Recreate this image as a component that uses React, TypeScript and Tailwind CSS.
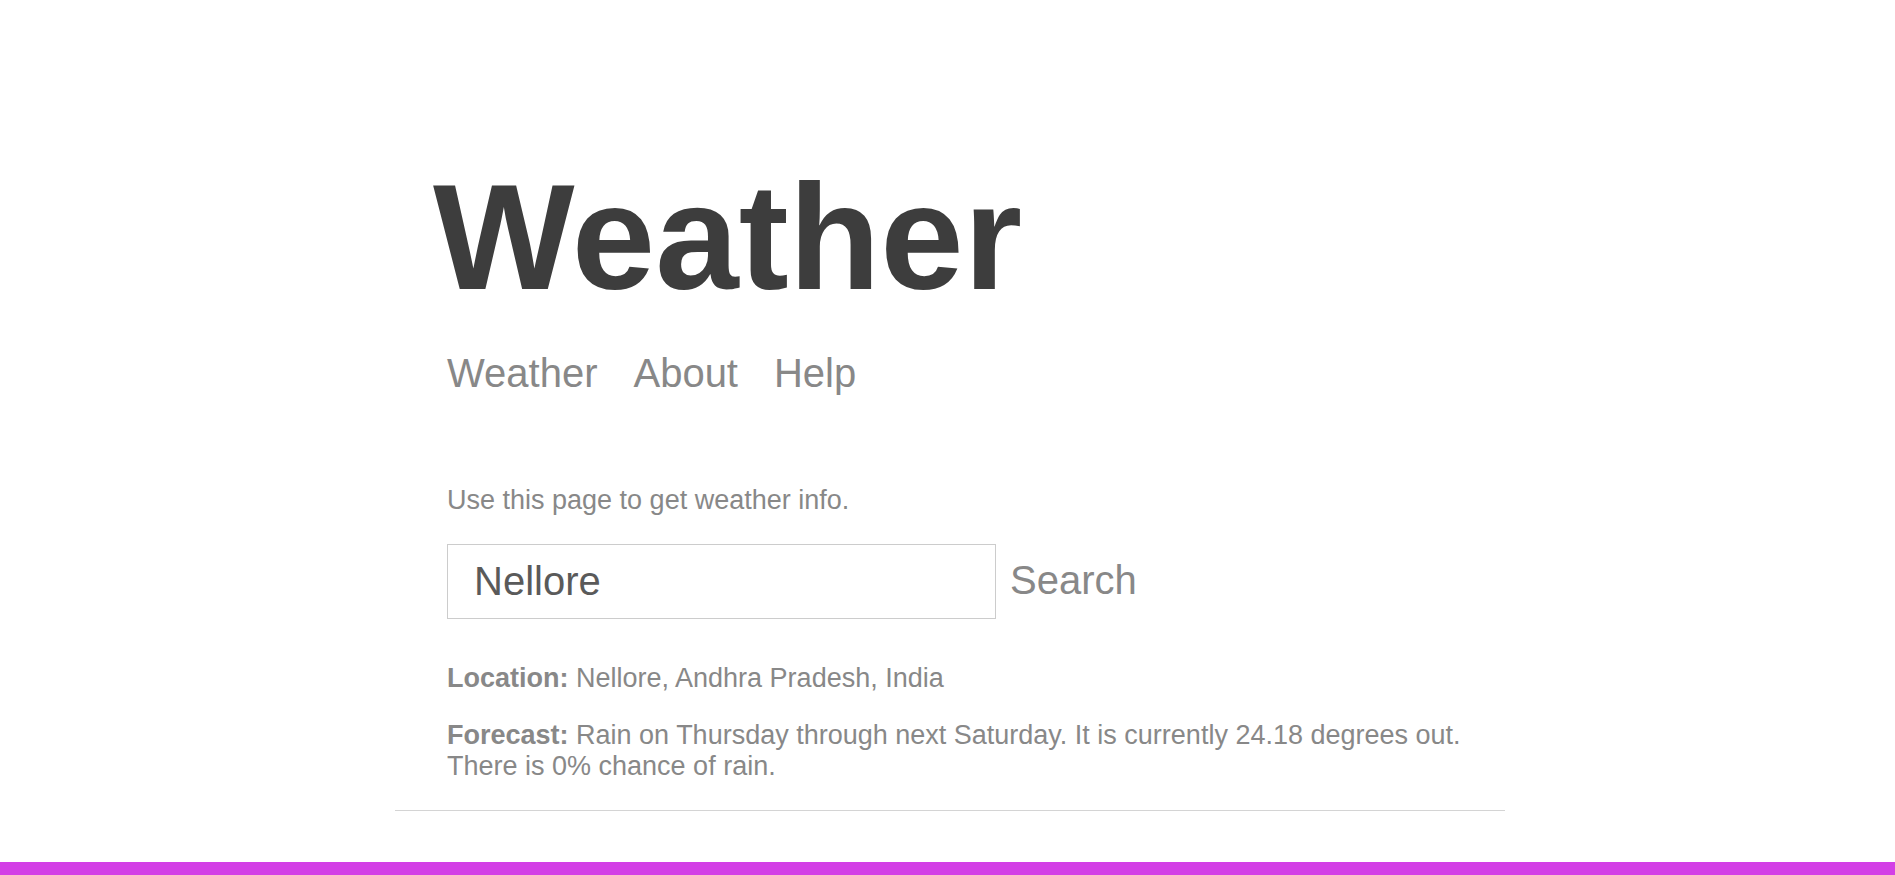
import React from "react";

export default function App() {
  return (
    <div className="w-full h-[875px] bg-white flex flex-col overflow-hidden font-['Liberation_Sans',Arial,sans-serif]">
      <div className="ml-[395px] w-[1110px] flex flex-col">
        <h1 className="mt-[162px] pl-[38px] text-[150px] leading-[150px] font-bold text-[#3d3d3d]">
          Weather
        </h1>
        <nav className="mt-[41px] pl-[52px] flex gap-[36px] text-[40px] leading-[40px] text-[#888888]">
          <a href="#">Weather</a>
          <a href="#">About</a>
          <a href="#">Help</a>
        </nav>
        <div className="pl-[52px] flex flex-col">
          <p className="mt-[92px] text-[27px] leading-[31px] text-[#888888]">
            Use this page to get weather info.
          </p>
          <form className="mt-[28px] flex items-start" onSubmit={(e) => e.preventDefault()}>
            <input
              defaultValue="Nellore"
              className="w-[549px] h-[75px] border border-[#cccccc] pl-[26px] text-[40px] text-[#5a5a5a] outline-none font-['Liberation_Sans',Arial,sans-serif]"
            />
            <button
              type="submit"
              className="ml-[14px] mt-[16px] text-[40px] leading-[40px] text-[#888888] bg-transparent font-['Liberation_Sans',Arial,sans-serif]"
            >
              Search
            </button>
          </form>
          <p className="mt-[44px] text-[27px] leading-[31px] text-[#888888]">
            <b className="font-bold">Location:</b> Nellore, Andhra Pradesh, India
          </p>
          <p className="mt-[26px] w-[1050px] text-[27px] leading-[31px] text-[#888888]">
            <b className="font-bold">Forecast:</b> Rain on Thursday through next Saturday. It is currently 24.18 degrees out.
            <br />
            There is 0% chance of rain.
          </p>
        </div>
        <div className="mt-[28px] h-px bg-[#d4d4d4]" />
      </div>
      <div className="mt-[51px] h-[14px] w-full bg-[#d33fe6]" />
    </div>
  );
}
